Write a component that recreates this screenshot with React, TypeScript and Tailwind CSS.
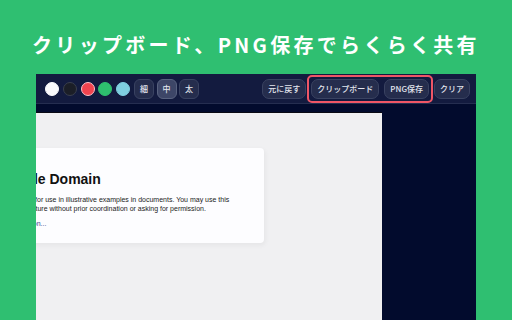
import React from "react";

const jp = { fontFamily: '"Noto Sans CJK JP", "Noto Sans", sans-serif' };
const web = { fontFamily: '"Liberation Sans", Arial, sans-serif' };

const ToolButton = ({ label, active }: { label: string; active?: boolean }) => (
  <button
    className={`h-[20px] rounded-[7px] border px-[5px] text-[8px] font-medium leading-none text-[#e3e6ee] ${
      active ? "border-[#56607f] bg-[#3b4465]" : "border-[#394261] bg-[#252d4d]"
    }`}
    style={jp}
  >
    {label}
  </button>
);

const SizeButton = ({ label, active }: { label: string; active?: boolean }) => (
  <button
    className={`flex h-[20px] w-[20px] items-center justify-center rounded-[6px] border text-[8px] font-medium leading-none text-[#e3e6ee] ${
      active ? "border-[#58627f] bg-[#3d4667]" : "border-[#394261] bg-[#252d4d]"
    }`}
    style={jp}
  >
    {label}
  </button>
);

export default function App() {
  const colors = [
    "bg-[#fafafc] border-[#fafafc]",
    "bg-[#1b1e27] border-[#3a3f4e]",
    "bg-[#f2444f] border-[#ffc2c8]",
    "bg-[#2ebf6e] border-[#2ebf6e]",
    "bg-[#7fcfe0] border-[#7fcfe0]",
  ];

  return (
    <div className="flex h-[320px] w-[512px] flex-col items-center overflow-hidden bg-[#2fbf71]">
      {/* headline */}
      <div className="flex h-[74px] w-full shrink-0 justify-center pt-[31px]">
        <h1
          className="text-[20px] font-bold leading-[28px] tracking-[3.3px] text-white"
          style={jp}
        >
          クリップボード、PNG保存でらくらく共有
        </h1>
      </div>

      {/* app window */}
      <div className="flex w-[440px] flex-1 flex-col bg-[#020b2d]">
        {/* toolbar */}
        <div className="flex h-[30px] shrink-0 items-center border-b border-[#252e50] bg-[#131b3f] pl-[9px] pr-[6px]">
          <div className="flex items-center gap-[3.75px]">
            {colors.map((c, i) => (
              <span key={i} className={`h-[14px] w-[14px] rounded-full border ${c}`} />
            ))}
          </div>
          <div className="ml-[4px] flex items-center gap-[2.5px]">
            <SizeButton label="細" />
            <SizeButton label="中" active />
            <SizeButton label="太" />
          </div>
          <div className="ml-auto flex items-center gap-[1px]">
            <ToolButton label="元に戻す" />
            <div className="flex items-center gap-[5px] rounded-[5px] border-2 border-[#ef5666] p-[2px]">
              <ToolButton label="クリップボード" />
              <ToolButton label="PNG保存" />
            </div>
            <ToolButton label="クリア" />
          </div>
        </div>

        {/* captured page */}
        <div className="flex flex-1 pt-[8px]">
          <div
            className="h-full w-[346px] overflow-hidden border-t border-[#0a0a14] bg-[#f0f0f2]"
            style={web}
          >
            <div className="ml-[-62px] mt-[35px] w-[290px] rounded-[4px] bg-[#fdfdff] px-[14px] pb-[14px] pt-[14px] shadow-[1px_2px_4px_1px_rgba(0,0,0,0.04)]">
              <h2 className="mt-[9px] text-[14px] font-bold leading-[16px] text-[#111]">
                Example Domain
              </h2>
              <p className="mt-[9px] text-[7px] leading-[8.5px] text-[#222]">
                This domain is for use in illustrative examples in documents. You may use this
                domain in literature without prior coordination or asking for permission.
              </p>
              <p className="mt-[7px] text-[7px] leading-[8.5px]">
                <a className="text-[#38488f]">More information...</a>
              </p>
            </div>
          </div>
        </div>
      </div>
    </div>
  );
}
